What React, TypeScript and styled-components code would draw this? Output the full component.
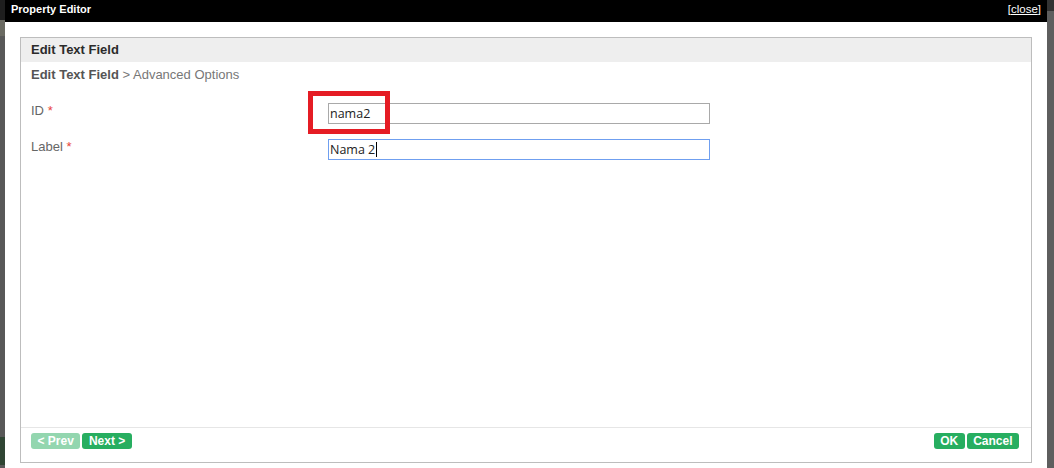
import React from "react";
import styled, { createGlobalStyle } from "styled-components";

const GlobalStyle = createGlobalStyle`
  html, body { margin: 0; padding: 0; background: #575757; }
  body { font-family: "Liberation Sans", Arial, sans-serif; }
  * { box-sizing: border-box; }
`;

const Screen = styled.div`
  display: flex;
  width: 1054px;
  height: 468px;
  overflow: hidden;
`;

const SideStrip = styled.div<{ $w: number }>`
  width: ${(p) => p.$w}px;
  flex: none;
  display: flex;
  flex-direction: column;
  background: #595959;
  overflow: hidden;
`;

const StripBand = styled.div<{ $h: number; $c: string }>`
  height: ${(p) => p.$h}px;
  flex: none;
  background: ${(p) => p.$c};
`;

const StripFill = styled.div<{ $c: string }>`
  flex: 1;
  background: ${(p) => p.$c};
`;

const Dialog = styled.div`
  flex: 1;
  display: flex;
  flex-direction: column;
  background: #fff;
`;

const TitleBar = styled.div`
  height: 22px;
  flex: none;
  background: #000;
  color: #fff;
  display: flex;
  justify-content: space-between;
  align-items: flex-start;
  padding: 0 6px 0 6px;
  line-height: 18px;
`;

const Title = styled.span`
  font-weight: bold;
  font-size: 11px;
`;

const CloseLink = styled.span`
  font-size: 11.5px;
  u { text-decoration: underline; }
`;

const DialogBody = styled.div`
  flex: 1;
  display: flex;
  padding: 15px 15px 5px 15px;
`;

const Panel = styled.div`
  flex: 1;
  display: flex;
  flex-direction: column;
  border: 1px solid #bdbdbd;
`;

const PanelHeader = styled.div`
  height: 24px;
  line-height: 24px;
  background: #eee;
  padding-left: 10px;
  font-size: 13px;
  font-weight: bold;
  color: #2b2b2b;
`;

const Breadcrumb = styled.div`
  margin-top: 5px;
  padding-left: 10px;
  font-size: 13px;
  line-height: 16px;
  color: #777;
  b { color: #555; }
`;

const Form = styled.div`
  flex: 1;
  display: grid;
  grid-template-columns: 297px 382px;
  row-gap: 15px;
  align-content: start;
  padding: 20px 10px 0 10px;
`;

const FieldLabel = styled.div`
  font-size: 13px;
  line-height: 16px;
  color: #666;
`;

const Required = styled.span`
  color: #e8433b;
`;

const FieldWrap = styled.div`
  position: relative;
`;

const TextBox = styled.div<{ $focused?: boolean }>`
  height: 21px;
  border: 1px solid ${(p) => (p.$focused ? "#6f9ff0" : "#a9a9a9")};
  padding: 0 1px;
  font-family: "Open Sans", "Liberation Sans", sans-serif;
  font-size: 12.5px;
  line-height: 19px;
  color: #222;
  white-space: pre;
`;

const Caret = styled.span`
  display: inline-block;
  width: 1px;
  height: 15px;
  background: #000;
  vertical-align: -3px;
  margin-left: 1px;
`;

const Highlight = styled.div`
  position: absolute;
  left: -20px;
  top: -12px;
  width: 82px;
  height: 43px;
  border: 5px solid #e51c24;
  pointer-events: none;
`;

const Footer = styled.div`
  display: flex;
  justify-content: space-between;
  border-top: 1px solid #e6e6e6;
  padding: 5px 12px 13px 10px;
`;

const ButtonGroup = styled.div`
  display: flex;
  gap: 2px;
`;

const Button = styled.button<{ $disabled?: boolean }>`
  height: 16px;
  padding: 0 6.5px;
  border: none;
  border-radius: 3px;
  background: ${(p) => (p.$disabled ? "#93d6af" : "#27ae60")};
  color: #fff;
  font-family: "Liberation Sans", Arial, sans-serif;
  font-weight: bold;
  font-size: 12px;
  line-height: 16px;
  cursor: pointer;
`;

export default function App() {
  return (
    <>
      <GlobalStyle />
      <Screen>
        <SideStrip $w={5}>
          <StripBand $h={20} $c="#1e1e1e" />
          <StripBand $h={16} $c="#6a6a62" />
          <StripFill $c="#585858" />
          <StripBand $h={28} $c="#2f4533" />
          <StripBand $h={3} $c="#585858" />
        </SideStrip>
        <Dialog>
          <TitleBar>
            <Title>Property Editor</Title>
            <CloseLink>
              [<u>close</u>]
            </CloseLink>
          </TitleBar>
          <DialogBody>
            <Panel>
              <PanelHeader>Edit Text Field</PanelHeader>
              <Breadcrumb>
                <b>Edit Text Field</b> &gt; Advanced Options
              </Breadcrumb>
              <Form>
                <FieldLabel>
                  ID <Required>*</Required>
                </FieldLabel>
                <FieldWrap>
                  <TextBox>nama2</TextBox>
                  <Highlight />
                </FieldWrap>
                <FieldLabel>
                  Label <Required>*</Required>
                </FieldLabel>
                <FieldWrap>
                  <TextBox $focused>
                    Nama 2<Caret />
                  </TextBox>
                </FieldWrap>
              </Form>
              <Footer>
                <ButtonGroup>
                  <Button $disabled>&lt; Prev</Button>
                  <Button>Next &gt;</Button>
                </ButtonGroup>
                <ButtonGroup>
                  <Button>OK</Button>
                  <Button>Cancel</Button>
                </ButtonGroup>
              </Footer>
            </Panel>
          </DialogBody>
        </Dialog>
        <SideStrip $w={7}>
          <StripBand $h={11} $c="#333" />
          <StripFill $c="#5e5e5e" />
        </SideStrip>
      </Screen>
    </>
  );
}
